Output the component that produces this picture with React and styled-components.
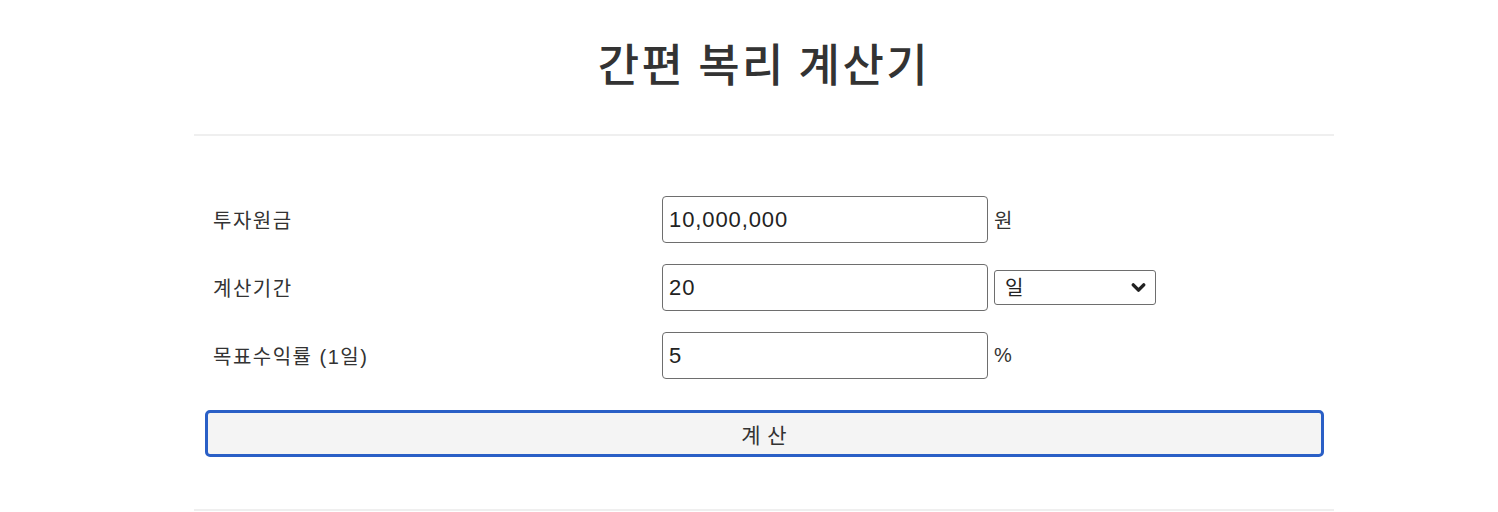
import React, { useState } from 'react'
import styled, { createGlobalStyle } from 'styled-components'
import { ChevronDown } from 'lucide-react'

const GlobalStyle = createGlobalStyle`
  body {
    margin: 0;
    background: #fff;
    font-family: "Liberation Sans", "Noto Sans CJK KR", sans-serif;
    color: #333;
  }
`

const Page = styled.div`
  box-sizing: border-box;
  width: 100%;
  padding-left: 30px;
`

const Container = styled.div`
  width: 1140px;
  margin: 0 auto;
`

const Title = styled.h1`
  margin: 0;
  padding-top: 31px;
  line-height: 64px;
  font-size: 45px;
  font-weight: 500;
  letter-spacing: 2.5px;
  text-align: center;
  color: #333;
  font-family: "Noto Sans CJK KR", sans-serif;
`

const Divider = styled.hr`
  margin: ${({ $top }) => $top}px 0 0;
  border: 0;
  height: 2px;
  background: #efefef;
`

const Form = styled.form`
  padding: 60px 10px 52px 11px;
  display: flex;
  flex-direction: column;
  gap: 21px;
`

const Row = styled.div`
  display: grid;
  grid-template-columns: 457px 326px auto;
  align-items: center;
`

const Label = styled.label`
  padding-left: 8px;
  font-size: 20px;
  letter-spacing: 1.5px;
  color: #333;
`

const TextInput = styled.input`
  box-sizing: border-box;
  width: 326px;
  height: 47px;
  padding: 0 6px;
  border: 1px solid #6e6e6e;
  border-radius: 4px;
  font-family: "Liberation Sans", "Noto Sans CJK KR", sans-serif;
  font-size: 22px;
  letter-spacing: 0.9px;
  color: #222;
  outline: none;
`

const Unit = styled.span`
  margin-left: 6px;
  font-size: 20px;
  color: #333;
`

const SelectWrap = styled.div`
  position: relative;
  margin-left: 6px;
  width: 162px;
  height: 35px;
`

const Select = styled.select`
  appearance: none;
  box-sizing: border-box;
  width: 100%;
  height: 100%;
  padding: 0 10px;
  border: 1px solid #6e6e6e;
  border-radius: 3px;
  background: #fff;
  font-family: "Liberation Sans", "Noto Sans CJK KR", sans-serif;
  font-size: 20px;
  color: #222;
`

const Arrow = styled(ChevronDown)`
  position: absolute;
  right: 7px;
  top: 7px;
  pointer-events: none;
  color: #222;
`

const Button = styled.button`
  box-sizing: border-box;
  margin-top: 10px;
  width: 100%;
  height: 47px;
  border: 3px solid #2a5fc6;
  border-radius: 5px;
  background: #f4f4f4;
  font-family: "Noto Sans CJK KR", sans-serif;
  font-size: 21px;
  letter-spacing: 1px;
  color: #333;
  cursor: pointer;
`

const App = () => {
  const [principal, setPrincipal] = useState('10,000,000')
  const [period, setPeriod] = useState('20')
  const [unit, setUnit] = useState('day')
  const [rate, setRate] = useState('5')

  return (
    <Page>
      <GlobalStyle />
      <Container>
        <Title>간편 복리 계산기</Title>
        <Divider $top={39} />
        <Form onSubmit={(e) => e.preventDefault()}>
          <Row>
            <Label>투자원금</Label>
            <TextInput value={principal} onChange={(e) => setPrincipal(e.target.value)} />
            <Unit>원</Unit>
          </Row>
          <Row>
            <Label>계산기간</Label>
            <TextInput value={period} onChange={(e) => setPeriod(e.target.value)} />
            <SelectWrap>
              <Select value={unit} onChange={(e) => setUnit(e.target.value)}>
                <option value="day">일</option>
                <option value="month">월</option>
                <option value="year">년</option>
              </Select>
              <Arrow size={21} strokeWidth={4} />
            </SelectWrap>
          </Row>
          <Row>
            <Label>목표수익률 (1일)</Label>
            <TextInput value={rate} onChange={(e) => setRate(e.target.value)} />
            <Unit>%</Unit>
          </Row>
          <Button type="submit">계 산</Button>
        </Form>
        <Divider $top={0} />
      </Container>
    </Page>
  )
}

export default App
